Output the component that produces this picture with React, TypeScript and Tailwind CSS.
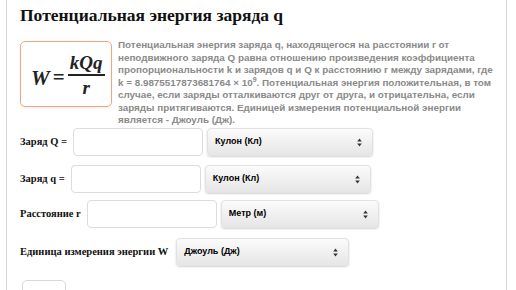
import React from "react";

const description = [
  "Потенциальная энергия заряда q, находящегося на расстоянии r от",
  "неподвижного заряда Q равна отношению произведения коэффициента",
  "пропорциональности k и зарядов q и Q к расстоянию r между зарядами, где",
  null,
  "случае, если заряды отталкиваются друг от друга, и отрицательна, если",
  "заряды притягиваются. Единицей измерения потенциальной энергии",
  "является - Джоуль (Дж).",
];

function Arrows() {
  return (
    <svg width="5" height="9" viewBox="0 0 5 9" className="shrink-0">
      <path d="M2.5 0.5 L4.8 3.6 L0.2 3.6 Z" fill="#333" />
      <path d="M2.5 8.5 L4.8 5.4 L0.2 5.4 Z" fill="#333" />
    </svg>
  );
}

function Select({ label, width }: { label: string; width: string }) {
  return (
    <div
      className={`${width} h-[28px] flex items-center justify-between pl-[7px] pr-[10px] rounded-[4px] border border-[#e2e2e2] bg-gradient-to-b from-[#fbfbfb] to-[#e6e6e6] shadow-[0_1px_2px_rgba(0,0,0,0.18)] font-['Liberation_Sans'] font-bold text-[9px] text-black`}
    >
      <span>{label}</span>
      <Arrows />
    </div>
  );
}

function Input({ width }: { width: string }) {
  return (
    <div className={`${width} h-[28px] bg-white border border-[#dcdcdc] rounded-[4px]`} />
  );
}

function Row({
  label,
  unit,
  inputWidth,
  selectWidth,
  withInput = true,
  className = "",
}: {
  label: string;
  unit: string;
  inputWidth?: string;
  selectWidth: string;
  withInput?: boolean;
  className?: string;
}) {
  return (
    <div className={`flex items-center h-[28px] ${className}`}>
      <span className="font-['Liberation_Serif'] font-bold text-[10.5px] text-[#111] mr-[6px] whitespace-nowrap">
        {label}
      </span>
      {withInput && inputWidth && <Input width={inputWidth} />}
      <div className={withInput ? "ml-[4px]" : "ml-[2px]"}>
        <Select label={unit} width={selectWidth} />
      </div>
    </div>
  );
}

export default function App() {
  return (
    <div className="bg-white w-[516px] h-[290px] overflow-hidden">
      <div className="ml-[6px] w-[501px] h-[290px] border-x border-[#d6d6d6] pl-[13px]">
        <h1 className="font-['Liberation_Serif'] font-bold text-[17.5px] leading-[24px] pt-[3px] text-[#111]">
          Потенциальная энергия заряда q
        </h1>

        <div className="flex mt-[14px]">
          <div className="w-[92px] h-[66px] shrink-0 border border-[#f5a47e] rounded-[5px] shadow-[0_1px_2px_rgba(0,0,0,0.08)] flex items-center pl-[10px]">
            <div className="font-['Liberation_Serif'] italic font-bold text-[#222] flex items-center">
              <span className="text-[21px] leading-none mt-[8px]">W</span>
              <span className="text-[21px] leading-none not-italic mx-[3px] mt-[6px]">=</span>
              <div className="flex flex-col items-center mt-[2px]">
                <span className="text-[19px] leading-[19px]">kQq</span>
                <span className="block w-[37px] h-[1.5px] bg-[#222] my-[2px]" />
                <span className="text-[19px] leading-[19px]">r</span>
              </div>
            </div>
          </div>
          <div className="ml-[6px] -mt-[2px] font-['Liberation_Sans'] font-bold text-[9.85px] leading-[12.5px] text-[#8a8a8a]">
            {description.map((line, i) =>
              line === null ? (
                <div key={i} className="whitespace-nowrap">
                  k = 8.9875517873681764 × 10<sup className="text-[7px]">9</sup>. Потенциальная энергия положительная, в том
                </div>
              ) : (
                <div key={i} className="whitespace-nowrap">
                  {line}
                </div>
              )
            )}
          </div>
        </div>

        <div className="flex flex-col mt-[1.5px]">
          <Row label="Заряд Q =" unit="Кулон (Кл)" inputWidth="w-[130px]" selectWidth="w-[166px]" />
          <Row label="Заряд q =" unit="Кулон (Кл)" inputWidth="w-[130px]" selectWidth="w-[166px]" className="mt-[9px]" />
          <Row label="Расстояние r" unit="Метр (м)" inputWidth="w-[130px]" selectWidth="w-[158px]" className="mt-[7px]" />
          <Row label="Единица измерения энергии W" unit="Джоуль (Дж)" selectWidth="w-[173px]" withInput={false} className="mt-[10px]" />
        </div>

        <div className="mt-[14px] ml-[2px] w-[44px] h-[30px] border border-[#d8d8d8] rounded-[5px] bg-white" />
      </div>
    </div>
  );
}
